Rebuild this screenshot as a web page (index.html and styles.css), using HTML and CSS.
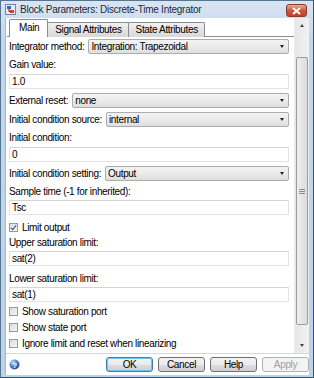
FILE: index.html
```html
<!DOCTYPE html>
<html lang="en">
<head>
  <meta charset="UTF-8">
  <title>Block Parameters: Discrete-Time Integrator</title>
  <link rel="stylesheet" href="styles.css">
</head>
<body>
  <div class="window">
    <div class="titlebar">
      <svg class="appIcon" width="11" height="11" viewBox="0 0 11 11">
        <rect x="0.5" y="0.5" width="10" height="10" fill="#e8eef6" stroke="#6d86a8"/>
        <rect x="2" y="2" width="4" height="3" fill="#2f68b8"/>
        <rect x="5" y="6" width="4" height="3" fill="#d8401c"/>
        <path d="M4 5 L4 7.5 L5 7.5" stroke="#333" fill="none"/>
      </svg>
      <span class="title">Block Parameters: Discrete-Time Integrator</span>
      <div class="closeBtn">
        <svg width="9" height="8" viewBox="0 0 9 8"><path d="M1 1 L8 7 M8 1 L1 7" stroke="#fff" stroke-width="2"/></svg>
      </div>
    </div>

    <div class="client">
      <div class="scrollArea">
        <div class="pageContent">
          <div class="tabs">
            <div class="tab selected">Main</div>
            <div class="tab">Signal Attributes</div>
            <div class="tab">State Attributes</div>
          </div>
          <div class="pane">
            <div class="selectRow first">
              <span class="label">Integrator method:</span>
              <div class="combo">Integration: Trapezoidal</div>
            </div>
            <div class="label block">Gain value:</div>
            <div class="edit">1.0</div>
            <div class="selectRow">
              <span class="label">External reset:</span>
              <div class="combo">none</div>
            </div>
            <div class="selectRow">
              <span class="label">Initial condition source:</span>
              <div class="combo">internal</div>
            </div>
            <div class="label block">Initial condition:</div>
            <div class="edit">0</div>
            <div class="selectRow">
              <span class="label">Initial condition setting:</span>
              <div class="combo">Output</div>
            </div>
            <div class="label block">Sample time (-1 for inherited):</div>
            <div class="edit tight">Tsc</div>
            <div class="check spaced"><span class="box checked"></span>Limit output</div>
            <div class="label block near">Upper saturation limit:</div>
            <div class="edit tight">sat(2)</div>
            <div class="label block far">Lower saturation limit:</div>
            <div class="edit tight">sat(1)</div>
            <div class="check"><span class="box"></span>Show saturation port</div>
            <div class="check"><span class="box"></span>Show state port</div>
            <div class="check"><span class="box"></span>Ignore limit and reset when linearizing</div>
          </div>
        </div>
        <div class="scrollbar">
          <div class="arrow up"></div>
          <div class="track">
            <div class="thumb"><span class="grip"></span></div>
          </div>
          <div class="arrow down"></div>
        </div>
      </div>

      <div class="buttonBar">
        <svg class="helpIcon" width="11" height="11" viewBox="0 0 11 11">
          <defs>
            <radialGradient id="hg" cx="0.35" cy="0.3" r="0.8">
              <stop offset="0" stop-color="#c9dcf7"/>
              <stop offset="0.5" stop-color="#4d7fd0"/>
              <stop offset="1" stop-color="#1c3f8c"/>
            </radialGradient>
          </defs>
          <circle cx="5.5" cy="5.5" r="5" fill="url(#hg)"/>
          <text x="5.5" y="8.5" font-size="8" font-family="Liberation Sans, sans-serif" font-weight="bold" fill="#fff" text-anchor="middle">?</text>
        </svg>
        <div class="buttons">
          <div class="btn default">OK</div>
          <div class="btn">Cancel</div>
          <div class="btn">Help</div>
          <div class="btn disabled">Apply</div>
        </div>
      </div>
    </div>
  </div>
</body>
</html>
```

FILE: styles.css
```css
/* dialog in a classic Windows 7 frame */
body {
  margin: 0;
  background: #ffffff;
  font-family: "Liberation Sans", Arial, sans-serif;
  font-size: 10px;
  letter-spacing: -0.35px;
  color: #000;
}

.window {
  width: 314px;
  height: 378px;
  box-sizing: border-box;
  background: linear-gradient(#d9e5f3, #c3d6ec 40px, #bcd1ea);
  border: 1px solid #56758f;
  border-right-color: #2d5a6a;
  border-bottom-color: #2d5a6a;
  display: flex;
  flex-direction: column;
}

.titlebar {
  height: 17px;
  display: flex;
  align-items: center;
  padding-left: 4px;
  position: relative;
}

.appIcon {
  margin-right: 4px;
}

.title {
  font-size: 10px;
  letter-spacing: -0.25px;
  color: #1e2a36;
}

.closeBtn {
  position: absolute;
  right: 6px;
  top: 3px;
  width: 21px;
  height: 13px;
  box-sizing: border-box;
  border: 1px solid #8a3b2e;
  border-radius: 3px;
  background: linear-gradient(#e8a796, #d2573d 50%, #c33f25);
  display: flex;
  align-items: center;
  justify-content: center;
}

.client {
  flex: 1;
  margin: 0 4px 2px 4px;
  background: #ffffff;
  border-left: 1px solid #a9b6c6;
  display: flex;
  flex-direction: column;
}

.scrollArea {
  flex: 1;
  display: flex;
  border-bottom: 1px solid #d8d8d8;
}

.pageContent {
  flex: 1;
  padding: 2px 0 0 1px;
}

/* tabs */
.tabs {
  display: flex;
  align-items: flex-end;
  height: 17px;
  padding-left: 2px;
}

.tab {
  height: 14px;
  padding: 0 6px 0 7px;
  line-height: 14px;
  border: 1px solid #898c95;
  border-bottom: none;
  margin-left: -1px;
  background: linear-gradient(#f2f2f2, #e3e3e3 50%, #d8d8d8);
  border-radius: 2px 2px 0 0;
}

.tab.selected {
  height: 17px;
  line-height: 16px;
  background: #ffffff;
  padding: 0 8px 0 9px;
  position: relative;
  z-index: 1;
  margin-left: 0;
}

.pane {
  border-top: 1px solid #898c95;
  margin-top: -1px;
  padding: 0 5px 0 2px;
}

.label {
  line-height: 14px;
  white-space: nowrap;
}

.label.block {
  height: 14px;
  margin-top: 4px;
}

.label.near {
  margin-top: 2px;
}

.label.far {
  margin-top: 6px;
}

.selectRow {
  display: flex;
  align-items: center;
  gap: 4px;
  margin-top: 4px;
  height: 15px;
}

.selectRow.first {
  margin-top: 2px;
}

.combo {
  flex: 1;
  height: 15px;
  box-sizing: border-box;
  border: 1px solid #acacac;
  border-radius: 2px;
  background: linear-gradient(#f3f3f3, #ebebeb 50%, #dedede);
  line-height: 13px;
  padding-left: 2px;
  position: relative;
}

.combo::after {
  content: "";
  position: absolute;
  right: 4px;
  top: 5px;
  border-left: 2px solid transparent;
  border-right: 2px solid transparent;
  border-top: 3px solid #222;
}

.edit {
  height: 15px;
  margin-top: 2px;
  box-sizing: border-box;
  border: 1px solid #e2e3ea;
  border-top-color: #d5d5d5;
  line-height: 13px;
  padding-left: 2px;
}

.edit.tight {
  margin-top: 1px;
}

.check {
  height: 14px;
  margin-top: 2px;
  display: flex;
  align-items: center;
  gap: 4px;
  white-space: nowrap;
}

.check.spaced {
  margin-top: 5px;
}

.box {
  width: 9px;
  height: 9px;
  box-sizing: border-box;
  border: 1px solid #9a9a9a;
  background: linear-gradient(135deg, #dcdcdc, #f5f5f5);
  position: relative;
}

.box.checked::after {
  content: "";
  position: absolute;
  left: 2px;
  top: 0px;
  width: 2px;
  height: 5px;
  border-right: 1.5px solid #2a4fa0;
  border-bottom: 1.5px solid #2a4fa0;
  transform: rotate(40deg);
}

/* vertical scrollbar */
.scrollbar {
  width: 14px;
  display: flex;
  flex-direction: column;
  background: linear-gradient(90deg, #e6e6e6, #f2f2f2);
  border-left: 1px solid #ececec;
}

.arrow {
  height: 15px;
  position: relative;
}

.arrow::after {
  content: "";
  position: absolute;
  left: 5px;
  border-left: 2px solid transparent;
  border-right: 2px solid transparent;
}

.arrow.up::after {
  top: 6px;
  border-bottom: 3px solid #444;
}

.arrow.down::after {
  top: 6px;
  border-top: 3px solid #444;
}

.track {
  flex: 1;
  padding-top: 24px;
  padding-bottom: 13px;
  display: flex;
}

.thumb {
  flex: 1;
  margin: 0 1px;
  border: 1px solid #9b9b9b;
  border-radius: 2px;
  background: linear-gradient(90deg, #eeeeee, #dcdcdc);
  display: flex;
  align-items: center;
  justify-content: center;
}

.grip {
  width: 6px;
  height: 5px;
  border-top: 1px solid #8c8c8c;
  border-bottom: 1px solid #8c8c8c;
  box-sizing: border-box;
  background: linear-gradient(#ffffff00 1px, #8c8c8c 1px, #8c8c8c 2px, #ffffff00 2px);
}

/* bottom buttons */
.buttonBar {
  height: 20px;
  display: flex;
  align-items: center;
  padding: 0 0 1px 3px;
}

.helpIcon {
  flex: none;
}

.buttons {
  margin-left: auto;
  display: flex;
  gap: 5px;
}

.btn {
  width: 47px;
  height: 15px;
  box-sizing: border-box;
  border: 1px solid #707070;
  border-radius: 3px;
  background: linear-gradient(#f2f2f2, #ebebeb 50%, #dddddd 51%, #cfcfcf);
  text-align: center;
  line-height: 13px;
}

.btn.default {
  border-color: #3c7fb1;
  box-shadow: inset 0 0 0 1px #6ec8ee;
}

.btn.disabled {
  color: #a0a0a0;
  border-color: #adb2b5;
  background: #f4f4f4;
}
```
